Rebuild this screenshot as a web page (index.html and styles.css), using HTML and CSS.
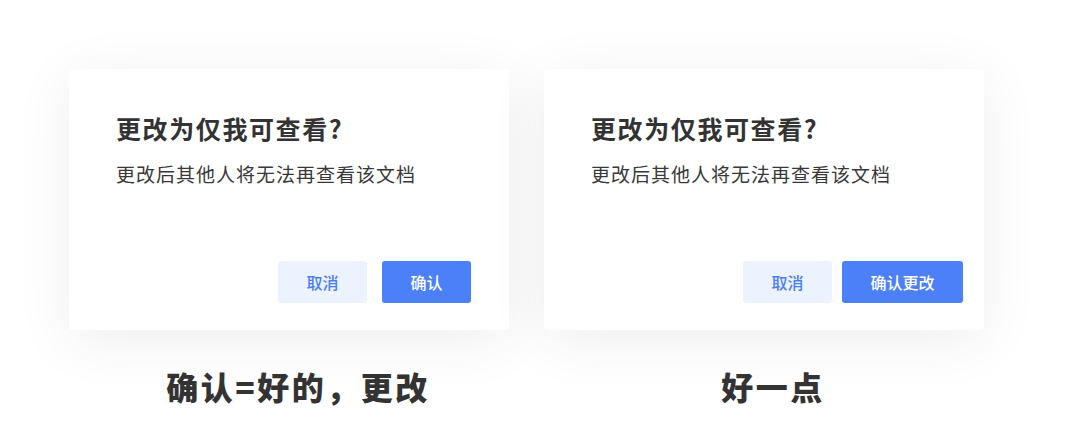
FILE: index.html
```html
<!DOCTYPE html>
<html lang="zh-CN">
<head>
    <meta charset="UTF-8">
    <title>更改为仅我可查看</title>
    <link rel="stylesheet" href="styles.css">
</head>
<body>
<div class="compare">
    <div class="column">
        <div class="dialog">
            <h2 class="dialog-title">更改为仅我可查看?</h2>
            <p class="dialog-text">更改后其他人将无法再查看该文档</p>
            <div class="dialog-actions">
                <button class="btn btn-cancel">取消</button>
                <button class="btn btn-primary">确认</button>
            </div>
        </div>
        <div class="caption">确认=好的，更改</div>
    </div>

    <div class="column">
        <div class="dialog dialog-better">
            <h2 class="dialog-title">更改为仅我可查看?</h2>
            <p class="dialog-text">更改后其他人将无法再查看该文档</p>
            <div class="dialog-actions">
                <button class="btn btn-cancel">取消</button>
                <button class="btn btn-primary btn-wide">确认更改</button>
            </div>
        </div>
        <div class="caption">好一点</div>
    </div>
</div>
</body>
</html>
```

FILE: styles.css
```css
body {
    margin: 0;
    background: #fff;
    font-family: "Noto Sans CJK SC", "Noto Sans", sans-serif;
    color: #333;
}

.compare {
    display: flex;
    gap: 35px;
    padding: 69px 0 0 69px;
}

.column {
    width: 440px;
}

.dialog {
    box-sizing: border-box;
    height: 261px;
    background: #fff;
    border-radius: 4px;
    box-shadow: 0 10px 60px rgba(0, 0, 0, 0.07);
    padding: 43px 38px 27px 47px;
    display: flex;
    flex-direction: column;
}

.dialog-better {
    padding-right: 21px;
}

.dialog-title {
    margin: 0;
    font-size: 25px;
    line-height: 33px;
    font-weight: 700;
    letter-spacing: 1.6px;
    color: #333;
}

.dialog-text {
    margin: 16px 0 0;
    font-size: 19px;
    line-height: 26px;
    letter-spacing: 1px;
    color: #383838;
}

.dialog-actions {
    margin-top: auto;
    display: flex;
    justify-content: flex-end;
    gap: 15px;
}

.dialog-better .dialog-actions {
    gap: 10px;
}

.btn {
    width: 89px;
    height: 42px;
    border: none;
    border-radius: 3px;
    font-family: inherit;
    font-size: 16px;
    font-weight: 500;
    padding: 0;
}

.btn-cancel {
    background: #ecf2fe;
    color: #4a7ef5;
}

.btn-primary {
    background: #4c80f8;
    color: #fff;
}

.btn-wide {
    width: 121px;
}

.caption {
    margin-top: 35px;
    padding-left: 18px;
    text-align: center;
    font-size: 32px;
    line-height: 42px;
    font-weight: 900;
    letter-spacing: 2.5px;
    color: #333;
}
```
